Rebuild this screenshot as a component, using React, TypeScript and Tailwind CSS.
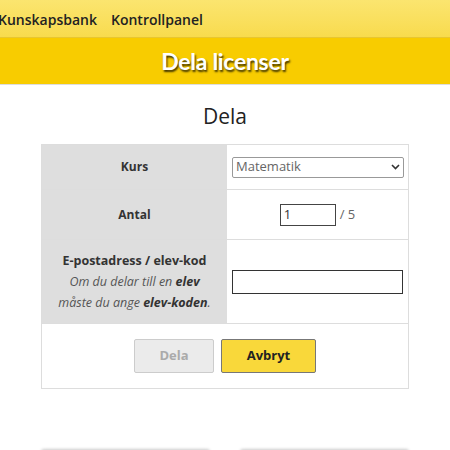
import React from "react";

export default function App() {
  return (
    <div className="w-[450px] h-[450px] overflow-hidden bg-white relative" style={{ fontFamily: '"Open Sans", sans-serif' }}>
      <div className="h-[38px] bg-gradient-to-b from-[#fbe56f] to-[#f8db4d] border-b border-[#e8c631] flex items-center pl-0 gap-[14px] text-[14px] font-semibold text-[#222] pt-[1px]">
        <span className="-ml-[2px]">Kunskapsbank</span>
        <span>Kontrollpanel</span>
      </div>
      <div className="h-[47px] bg-[#f8cc00] border-b border-[#ddd] flex items-center justify-center">
        <span className="text-[23px] font-bold text-white tracking-[-0.3px]" style={{ fontFamily: 'Lato, sans-serif', textShadow: '1px 2px 2px rgba(0,0,0,0.75)' }}>Dela licenser</span>
      </div>
      <h2 className="text-center text-[21px] text-[#222] mt-[17px] leading-[28px]">Dela</h2>
      <div className="mx-[41px] mt-[14px] border border-[#ddd] text-[12px] text-[#333]">
        <div className="flex h-[45px] border-b border-[#ddd]">
          <div className="w-[185px] bg-[#dedede] flex items-center justify-center font-bold">Kurs</div>
          <div className="flex-1 flex items-center pl-[5px] pr-[4px]">
            <div className="w-full h-[21px] border border-[#999] rounded-[2px] flex items-center justify-between px-[3px] text-[#666] text-[13px]">
              <span>Matematik</span>
              <svg width="9" height="6" viewBox="0 0 9 6"><path d="M1 1l3.5 3.5L8 1" fill="none" stroke="#333" strokeWidth="1.6" /></svg>
            </div>
          </div>
        </div>
        <div className="flex h-[50px] border-b border-[#ddd]">
          <div className="w-[185px] bg-[#dedede] flex items-center justify-center font-bold">Antal</div>
          <div className="flex-1 flex items-center justify-center gap-[4px]">
            <div className="w-[56px] h-[22px] border border-[#444] flex items-center px-[3px] text-[#333] text-[13px]">1</div>
            <span className="text-[#666] text-[13px]">/ 5</span>
          </div>
        </div>
        <div className="flex h-[84px] border-b border-[#ddd]">
          <div className="w-[185px] bg-[#dedede] flex flex-col items-center justify-center leading-[21px] text-[12.5px]">
            <span className="font-bold">E-postadress / elev-kod</span>
            <span className="italic text-[#555]">Om du delar till en <b className="text-[#333]">elev</b></span>
            <span className="italic text-[#555]">måste du ange <b className="text-[#333]">elev-koden</b>.</span>
          </div>
          <div className="flex-1 flex items-center pl-[5px] pr-[5px]">
            <div className="w-full h-[24px] border border-[#333]"></div>
          </div>
        </div>
        <div className="h-[64px] flex items-center justify-center gap-[7px] pb-[1px]">
          <div className="w-[80px] h-[34px] bg-[#ebebeb] border border-[#ccc] rounded-[2px] flex items-center justify-center font-bold text-[13px] text-[#aaa]">Dela</div>
          <div className="w-[95px] h-[34px] bg-[#f9d83a] border border-[#777] rounded-[2px] flex items-center justify-center font-bold text-[13px] text-[#222]">Avbryt</div>
        </div>
      </div>
      <div className="flex mx-[41px] mt-[61px] gap-[30px]">
        <div className="flex-1 h-[20px] border-t border-[#bbb] rounded-t-[3px] shadow-[0_-1px_3px_rgba(0,0,0,0.2)]"></div>
        <div className="flex-1 h-[20px] border-t border-[#bbb] rounded-t-[3px] shadow-[0_-1px_3px_rgba(0,0,0,0.2)]"></div>
      </div>
    </div>
  );
}
